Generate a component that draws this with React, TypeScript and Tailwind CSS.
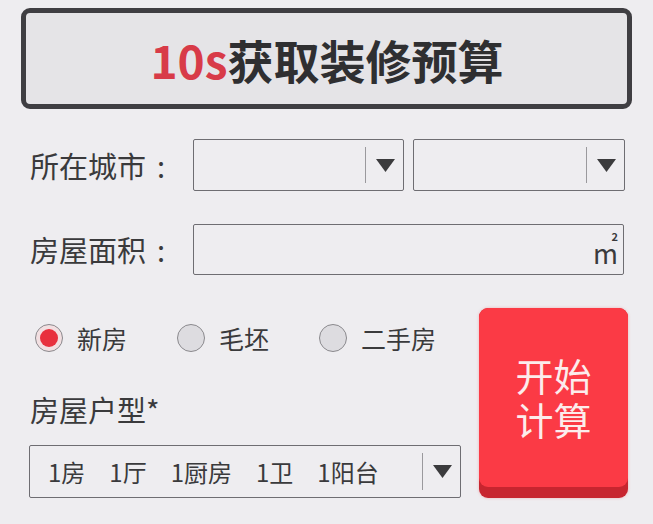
import React from "react";

const FONT = { fontFamily: '"Noto Sans CJK SC", "Noto Sans", sans-serif' };

function Arrow() {
  return (
    <svg width="19" height="13" viewBox="0 0 19 13" className="block">
      <polygon points="0,0 19,0 9.5,13" fill="#3b3b3d" />
    </svg>
  );
}

function SelectBox({ width, children }: { width: string; children?: React.ReactNode }) {
  return (
    <div className={`relative ${width} h-full border-[1.5px] border-[#6e6d72] rounded-[2px] flex items-center`}>
      <div className="flex-1 min-w-0 flex items-center h-full">{children}</div>
      <div className="w-px self-stretch my-[7px] bg-[#9a999d]" />
      <div className="w-[37px] flex items-center justify-center pl-[1px]">
        <Arrow />
      </div>
    </div>
  );
}

function Radio({ checked, label }: { checked?: boolean; label: string }) {
  return (
    <div className="w-[144px] flex items-center gap-[14px]">
      {checked ? (
        <div className="w-[28px] h-[28px] rounded-full border-[1.5px] border-[#8a898d] bg-[#f2dfe1] flex items-center justify-center">
          <div className="w-[18px] h-[18px] rounded-full bg-[#e8303d]" />
        </div>
      ) : (
        <div className="w-[28px] h-[28px] rounded-full border-[1.5px] border-[#8a898d] bg-[#dddce0]" />
      )}
      <span className="text-[25px] leading-[28px] text-[#3a3a3c]">{label}</span>
    </div>
  );
}

function Label({ text }: { text: string }) {
  return (
    <div className="w-[163px] flex items-center text-[29px] leading-none text-[#3a3a3c]">
      <span>{text}</span>
      <span className="ml-[11px]">:</span>
    </div>
  );
}

export default function App() {
  return (
    <div className="w-[653px] h-[524px] bg-[#eeedf0] overflow-hidden" style={FONT}>
      <div className="pt-[8px] px-[21px]">
        <div className="h-[101px] border-[5px] border-[#3f3e42] rounded-[9px] bg-[#e5e4e7] flex items-center justify-center pl-[1px]">
          <span className="text-[46px] font-bold leading-none text-[#2f2f31]">
            <span className="text-[#d83b48]">10s</span>获取装修预算
          </span>
        </div>
      </div>

      <div className="mt-[30px] pl-[30px] flex items-center h-[52px]">
        <Label text="所在城市" />
        <div className="flex h-full gap-[9px]">
          <SelectBox width="w-[211px]" />
          <SelectBox width="w-[212px]" />
        </div>
      </div>

      <div className="mt-[33px] pl-[30px] flex items-center h-[51px]">
        <Label text="房屋面积" />
        <div className="w-[431px] h-full border-[1.5px] border-[#6e6d72] rounded-[2px] flex items-center justify-end pr-[6px] pt-[6px]">
          <span className="relative text-[27px] leading-none text-[#3a3a3c] tracking-[-1px]">
            m
            <span className="absolute right-[0px] top-[-8px] text-[11px] font-bold leading-none">2</span>
          </span>
        </div>
      </div>

      <div className="mt-[33px] pl-[29px] flex gap-[18px]">
        <div className="w-[432px] pt-[16px]">
          <div className="flex pl-[6px] h-[28px] items-center">
            <Radio checked label="新房" />
            <Radio label="毛坯" />
            <Radio label="二手房" />
          </div>
          <div className="mt-[39px] pl-[1px] text-[29px] leading-[36px] text-[#3a3a3c]">房屋户型*</div>
          <div className="mt-[18px] h-[53px]">
            <SelectBox width="w-[432px]">
              <div className="pl-[18px] flex gap-[24px] text-[24px] leading-none text-[#3a3a3c]">
                <span>1房</span>
                <span>1厅</span>
                <span>1厨房</span>
                <span>1卫</span>
                <span>1阳台</span>
              </div>
            </SelectBox>
          </div>
        </div>
        <div className="w-[149px] h-[190px] rounded-[9px] bg-[#c7252f] pb-[11px] shadow-[0_0_3px_rgba(240,60,70,0.35)]">
          <div className="h-full rounded-[9px] bg-[#fb3a45] flex items-center justify-center pb-[2px]">
            <span className="text-[38px] leading-[44px] text-[#fcecec] text-center">
              开始
              <br />
              计算
            </span>
          </div>
        </div>
      </div>
    </div>
  );
}
